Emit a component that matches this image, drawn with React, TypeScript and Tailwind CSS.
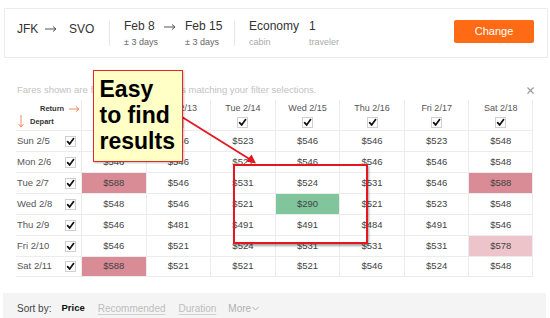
import React from "react";

const cols = ["Sun 2/12", "Mon 2/13", "Tue 2/14", "Wed 2/15", "Thu 2/16", "Fri 2/17", "Sat 2/18"];

type Cell = { v: string; c?: "pink" | "light" | "green" };
const rows: { day: string; cells: Cell[] }[] = [
  { day: "Sun 2/5", cells: [{ v: "$546" }, { v: "$546" }, { v: "$523" }, { v: "$546" }, { v: "$546" }, { v: "$523" }, { v: "$548" }] },
  { day: "Mon 2/6", cells: [{ v: "$546" }, { v: "$546" }, { v: "$521" }, { v: "$546" }, { v: "$546" }, { v: "$546" }, { v: "$548" }] },
  { day: "Tue 2/7", cells: [{ v: "$588", c: "pink" }, { v: "$546" }, { v: "$531" }, { v: "$524" }, { v: "$531" }, { v: "$546" }, { v: "$588", c: "pink" }] },
  { day: "Wed 2/8", cells: [{ v: "$548" }, { v: "$546" }, { v: "$521" }, { v: "$290", c: "green" }, { v: "$521" }, { v: "$523" }, { v: "$548" }] },
  { day: "Thu 2/9", cells: [{ v: "$546" }, { v: "$481" }, { v: "$491" }, { v: "$491" }, { v: "$484" }, { v: "$491" }, { v: "$546" }] },
  { day: "Fri 2/10", cells: [{ v: "$546" }, { v: "$521" }, { v: "$524" }, { v: "$531" }, { v: "$531" }, { v: "$531" }, { v: "$578", c: "light" }] },
  { day: "Sat 2/11", cells: [{ v: "$588", c: "pink" }, { v: "$521" }, { v: "$521" }, { v: "$521" }, { v: "$546" }, { v: "$524" }, { v: "$548" }] },
];

function Check() {
  return (
    <div className="w-[11px] h-[11px] border border-[#cfcfcf] bg-white flex items-center justify-center">
      <svg width="9" height="9" viewBox="0 0 9 9">
        <path d="M1.6 4.6 L3.6 7 L7.6 1.6" fill="none" stroke="#111" strokeWidth="1.7" strokeLinecap="round" strokeLinejoin="round" />
      </svg>
    </div>
  );
}

function Arrow({ color = "#555", w = 12 }: { color?: string; w?: number }) {
  return (
    <svg width={w} height="8" viewBox={`0 0 ${w} 8`}>
      <line x1="0" y1="4" x2={w - 1} y2="4" stroke={color} strokeWidth="1" />
      <path d={`M${w - 4} 1.5 L${w - 1} 4 L${w - 4} 6.5`} fill="none" stroke={color} strokeWidth="1" />
    </svg>
  );
}

export default function App() {
  const cellBg = (c?: string) =>
    c === "pink" ? "bg-[#d98c96]" : c === "light" ? "bg-[#ecc4c9]" : c === "green" ? "bg-[#80c59c]" : "";
  return (
    <div className="relative w-[550px] h-[318px] overflow-hidden bg-white font-['Liberation_Sans',Arial,sans-serif] text-[#333]">
      {/* Top search summary */}
      <div className="ml-[4px] mt-[8px] w-[544px] h-[50px] border border-[#ececec] flex items-center pl-[12px] pr-[13px]">
        <div className="w-[28px] text-[12px] leading-[14px] text-[#333] -mt-[8px]">JFK</div>
        <div className="w-[24px] -mt-[8px]">
          <Arrow />
        </div>
        <div className="w-[40px] text-[12px] leading-[14px] -mt-[8px]">SVO</div>
        <div className="w-px h-[25px] bg-[#e6e6e6]" />
        <div className="ml-[14px] w-[40px] flex flex-col">
          <span className="text-[12px] leading-[14px]">Feb 8</span>
          <span className="text-[9px] leading-[11px] mt-[4px] text-[#666]">± 3 days</span>
        </div>
        <div className="w-[21px] -mt-[13px]">
          <Arrow />
        </div>
        <div className="w-[49px] flex flex-col">
          <span className="text-[12px] leading-[14px]">Feb 15</span>
          <span className="text-[9px] leading-[11px] mt-[4px] text-[#666]">± 3 days</span>
        </div>
        <div className="w-px h-[25px] bg-[#e6e6e6]" />
        <div className="ml-[14px] w-[60px] flex flex-col">
          <span className="text-[12px] leading-[14px]">Economy</span>
          <span className="text-[9px] leading-[11px] mt-[4px] text-[#aaa]">cabin</span>
        </div>
        <div className="flex flex-col">
          <span className="text-[12px] leading-[14px]">1</span>
          <span className="text-[9px] leading-[11px] mt-[4px] text-[#aaa]">traveler</span>
        </div>
        <button className="ml-auto w-[80px] h-[23px] -mt-[3px] bg-[#fe6b14] rounded-[2px] text-white text-[11px]">
          Change
        </button>
      </div>

      {/* Notice */}
      <div className="mt-[24px] h-[16px] flex items-center pl-[17px] pr-[16px]">
        <span className="text-[9.5px] text-[#c2c2c2]">Fares shown are for the cheapest flights matching your filter selections.</span>
        <svg className="ml-auto" width="7" height="7" viewBox="0 0 7 7">
          <path d="M0.5 0.5 L6.5 6.5 M6.5 0.5 L0.5 6.5" stroke="#9a9a9a" strokeWidth="1.2" />
        </svg>
      </div>

      {/* Grid */}
      <div className="ml-[16px] mt-[2px] w-[517px]">
        <div className="grid grid-cols-[65px_repeat(7,minmax(0,1fr))] h-[30px]">
          <div className="relative">
            <div className="absolute left-[24px] top-[4px] flex items-center">
              <span className="text-[7.5px] font-bold text-[#333] leading-[10px]">Return</span>
              <span className="ml-[5px]">
                <Arrow color="#f58a5b" w={11} />
              </span>
            </div>
            <div className="absolute left-[2px] top-[15px] flex items-center">
              <svg width="6" height="13" viewBox="0 0 6 13">
                <line x1="3" y1="0" x2="3" y2="12" stroke="#f58a5b" strokeWidth="1" />
                <path d="M0.5 9 L3 12 L5.5 9" fill="none" stroke="#f58a5b" strokeWidth="1" />
              </svg>
              <span className="ml-[6px] text-[7.5px] font-bold text-[#333] leading-[10px]">Depart</span>
            </div>
          </div>
          {cols.map((c, i) => (
            <div
              key={c}
              className={`flex flex-col items-center pt-[3px] border-l border-[#ececec] ${i === 6 ? "border-r" : ""}`}
            >
              <span className="text-[9px] leading-[11px] text-[#555]">{c}</span>
              <div className="mt-[3px]">
                <Check />
              </div>
            </div>
          ))}
        </div>
        {rows.map((r, ri) => (
          <div
            key={r.day}
            className={`grid grid-cols-[65px_repeat(7,minmax(0,1fr))] h-[21px] border-t border-[#ececec] ${ri === 6 ? "border-b" : ""}`}
          >
            <div className="flex items-center justify-between pl-[1px] pr-[5px]">
              <span className="text-[9.5px] text-[#555]">{r.day}</span>
              <Check />
            </div>
            {r.cells.map((cell, ci) => (
              <div
                key={ci}
                className={`flex items-center justify-center border-l border-[#ececec] ${ci === 6 ? "border-r" : ""} ${cellBg(cell.c)}`}
              >
                <span className="text-[9.5px] text-[#444]">{cell.v}</span>
              </div>
            ))}
          </div>
        ))}
      </div>

      {/* Sort bar */}
      <div className="ml-[3px] mt-[16px] w-[543px] h-[30px] bg-[#f4f4f4] flex items-center pl-[14px] text-[10px]">
        <span className="text-[#444]">Sort by:</span>
        <span className="ml-[10px] font-bold text-[#111] text-[9.5px]">Price</span>
        <span className="ml-[13px] text-[#bdbdbd] underline decoration-[#d0d0d0] underline-offset-2">Recommended</span>
        <span className="ml-[13px] text-[#bdbdbd] underline decoration-[#d0d0d0] underline-offset-2">Duration</span>
        <span className="ml-[12px] text-[#b0b0b0] flex items-center">
          More
          <svg className="ml-[1px]" width="7" height="5" viewBox="0 0 7 5">
            <path d="M0.5 1 L3.5 4 L6.5 1" fill="none" stroke="#b0b0b0" strokeWidth="1" />
          </svg>
        </span>
      </div>

      {/* Highlight rectangle */}
      <div className="absolute left-[233px] top-[164px] w-[135px] h-[80px] border-2 border-[#e5161e] shadow-[1px_2px_2px_rgba(0,0,0,0.35)]" />

      {/* Arrow from callout */}
      <svg className="absolute left-0 top-0" width="550" height="318" viewBox="0 0 550 318">
        <line x1="182" y1="117" x2="251" y2="160" stroke="#e5161e" strokeWidth="1.8" />
        <path d="M256 163.5 L246 161.5 L251.5 154.5 Z" fill="#e5161e" />
      </svg>

      {/* Callout */}
      <div className="absolute left-[93px] top-[70px] w-[90px] h-[92px] bg-[#ffffc6] border-[1.5px] border-[#e5262a] pl-[5.5px] pt-[5px] shadow-[1px_1px_2px_rgba(0,0,0,0.25)]">
        <div className="text-[23px] leading-[26px] font-bold text-black">
          Easy
          <br />
          to find
          <br />
          results
        </div>
      </div>
    </div>
  );
}
